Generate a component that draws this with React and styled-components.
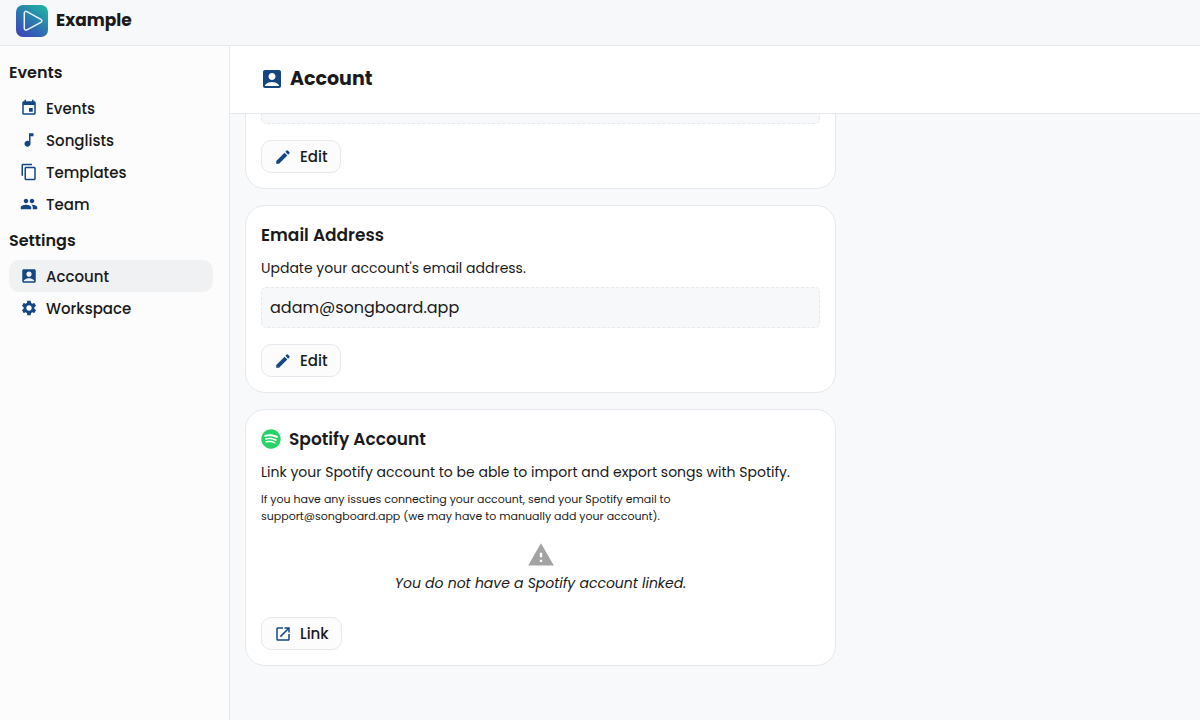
import { useLayoutEffect, useRef } from "react";
import styled, { createGlobalStyle } from "styled-components";
import {
  MdAccountBox,
  MdContentCopy,
  MdEdit,
  MdEvent,
  MdMusicNote,
  MdOpenInNew,
  MdPeople,
  MdSettings,
  MdWarning,
} from "react-icons/md";
import { FaSpotify } from "react-icons/fa";

const menu = [
  {
    title: "Events",
    links: [
      { name: "Events", icon: MdEvent },
      { name: "Songlists", icon: MdMusicNote },
      { name: "Templates", icon: MdContentCopy },
      { name: "Team", icon: MdPeople },
    ],
  },
  {
    title: "Settings",
    links: [
      { name: "Account", icon: MdAccountBox },
      { name: "Workspace", icon: MdSettings },
    ],
  },
];

function Logo() {
  return (
    <svg width="32" height="32" viewBox="0 0 32 32" aria-hidden="true">
      <defs>
        <linearGradient id="logo" x1="0.15" y1="1" x2="0.85" y2="0">
          <stop offset="0" stopColor="#3c45bd" />
          <stop offset="0.5" stopColor="#2b78b0" />
          <stop offset="1" stopColor="#20b3a3" />
        </linearGradient>
      </defs>
      <rect width="32" height="32" rx="7" fill="url(#logo)" />
      <path
        d="M8.3 8.2c0-1.5 1.3-2.3 2.6-1.6l14 7.7c1.4.8 1.4 2.3 0 3l-14 7.5c-1.3.7-2.6-.1-2.6-1.5z"
        fill="none"
        stroke="#e9f6fb"
        strokeWidth="1.5"
        strokeLinejoin="round"
      />
    </svg>
  );
}

function Sidebar({ current }) {
  return (
    <SideNav>
      {menu.map((group) => (
        <section key={group.title}>
          <GroupTitle>{group.title}</GroupTitle>
          {group.links.map(({ name, icon: Icon }) => (
            <NavLink
              key={name}
              href={`#${name.toLowerCase()}`}
              $active={name === current}
            >
              <Icon size={18} />
              {name}
            </NavLink>
          ))}
        </section>
      ))}
    </SideNav>
  );
}

export default function App() {
  const scrollRef = useRef(null);

  // open the settings at the last card
  useLayoutEffect(() => {
    scrollRef.current.scrollTop = scrollRef.current.scrollHeight;
  }, []);

  return (
    <>
      <GlobalStyle />
      <Page>
        <TopBar>
          <Logo />
          <Brand>Example</Brand>
        </TopBar>
        <Body>
          <Sidebar current="Account" />
          <Main>
            <PageHeader>
              <MdAccountBox size={24} />
              <PageTitle>Account</PageTitle>
            </PageHeader>
            <Scroller ref={scrollRef}>
              <Card>
                <Field type="text" aria-label="Name" readOnly />
                <Button type="button">
                  <MdEdit size={18} />
                  Edit
                </Button>
              </Card>

              <Card>
                <CardTitle>Email Address</CardTitle>
                <Description as="label" htmlFor="email">
                  Update your account's email address.
                </Description>
                <Field
                  type="email"
                  id="email"
                  value="adam@songboard.app"
                  readOnly
                />
                <Button type="button">
                  <MdEdit size={18} />
                  Edit
                </Button>
              </Card>

              <Card>
                <CardTitle>
                  <FaSpotify size={20} color="#25d366" />
                  Spotify Account
                </CardTitle>
                <Description>
                  Link your Spotify account to be able to import and export
                  songs with Spotify.
                </Description>
                <Note>
                  If you have any issues connecting your account, send your
                  Spotify email to support@songboard.app (we may have to
                  manually add your account).
                </Note>
                <Empty>
                  <MdWarning size={28} color="#a3a3a3" />
                  <p>You do not have a Spotify account linked.</p>
                </Empty>
                <Button type="button">
                  <MdOpenInNew size={18} />
                  Link
                </Button>
              </Card>
            </Scroller>
          </Main>
        </Body>
      </Page>
    </>
  );
}

const GlobalStyle = createGlobalStyle`
  *,
  *::before,
  *::after {
    box-sizing: border-box;
  }

  body {
    margin: 0;
    background: #f7f9fb;
    color: #1a1a1a;
    font-family: Poppins, Inter, sans-serif;
    font-size: 15px;
  }

  h1, h2, h3, p {
    margin: 0;
  }

  svg {
    flex-shrink: 0;
  }
`;

const Page = styled.div`
  display: flex;
  flex-direction: column;
  height: 100vh;
`;

const TopBar = styled.header`
  display: flex;
  align-items: center;
  gap: 8px;
  padding: 4px 16px 8px;
  border-bottom: 1px solid #e5e9ed;
  background: #f6f8fa;
`;

const Brand = styled.span`
  font-size: 17px;
  font-weight: 700;
  line-height: 33px;
`;

const Body = styled.div`
  display: flex;
  flex: 1;
  min-height: 0;
`;

const SideNav = styled.nav`
  flex: 0 0 230px;
  padding: 6px 16px 0 9px;
  border-right: 1px solid #e5e9ed;
  background: #fcfcfc;
`;

const GroupTitle = styled.h3`
  padding: 9px 0 7px;
  font-size: 16px;
  font-weight: 600;
  line-height: 24px;
`;

const NavLink = styled.a`
  display: flex;
  align-items: center;
  gap: 8px;
  height: 32px;
  padding-left: 11px;
  border-radius: 10px;
  background: ${({ $active }) => ($active ? "#eff1f3" : "transparent")};
  color: inherit;
  font-weight: 500;
  text-decoration: none;

  svg {
    color: #144782;
  }
`;

const Main = styled.main`
  display: flex;
  flex: 1;
  flex-direction: column;
  min-width: 0;
`;

const PageHeader = styled.div`
  display: flex;
  align-items: center;
  gap: 6px;
  padding: 17px 30px 18px;
  border-bottom: 1px solid #e5e9ed;
  background: #ffffff;

  svg {
    color: #144782;
  }
`;

const PageTitle = styled.h1`
  font-size: 19px;
  font-weight: 700;
  line-height: 32px;
`;

const Scroller = styled.div`
  display: flex;
  flex: 1;
  flex-direction: column;
  gap: 16px;
  min-height: 0;
  padding: 16px 15px 54px;
  overflow-y: auto;
  scrollbar-width: none;
`;

const Card = styled.section`
  flex-shrink: 0;
  width: 100%;
  max-width: 591px;
  padding: 15px;
  border: 1px solid #e5e9ed;
  border-radius: 20px;
  background: #ffffff;
`;

const CardTitle = styled.h2`
  display: flex;
  align-items: center;
  gap: 8px;
  font-size: 17px;
  font-weight: 600;
  line-height: 28px;
`;

const Description = styled.p`
  display: block;
  margin: 8px 0;
  font-size: 14px;
  line-height: 22px;
`;

const Note = styled.p`
  max-width: 450px;
  font-size: 11px;
  line-height: 17px;
`;

const Field = styled.input`
  display: block;
  width: 100%;
  height: 41px;
  padding: 0 8px;
  border: 1px dashed #e6eaee;
  border-radius: 5px;
  background: #f6f8fa;
  color: inherit;
  font-family: inherit;
  font-size: 16px;
  outline: none;
`;

const Button = styled.button`
  display: flex;
  align-items: center;
  gap: 8px;
  height: 33px;
  margin-top: 16px;
  padding: 0 12px;
  border: 1px solid #e5e9ed;
  border-radius: 10px;
  background: #fcfcfc;
  color: inherit;
  font-family: inherit;
  font-size: 15px;
  font-weight: 500;
  cursor: pointer;

  svg {
    color: #144782;
  }
`;

const Empty = styled.div`
  display: flex;
  flex-direction: column;
  align-items: center;
  padding: 16px 0 4px;
  font-size: 14px;
  font-style: italic;
  line-height: 28px;
`;
